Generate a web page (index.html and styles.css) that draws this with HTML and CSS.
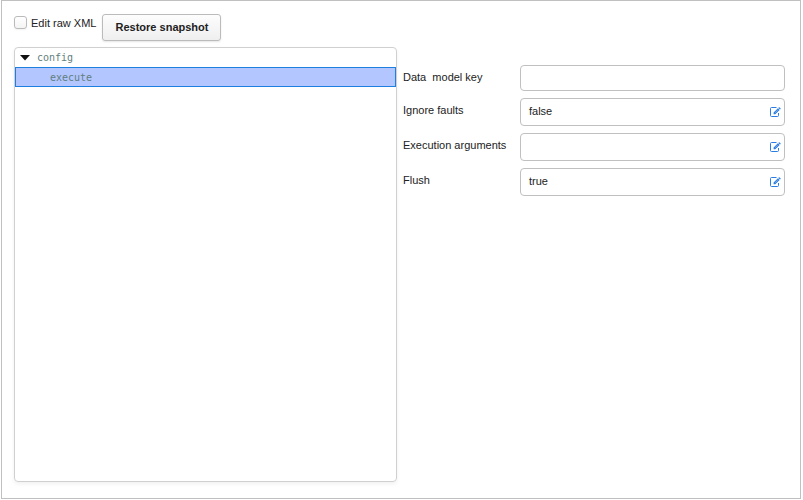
FILE: index.html
```html
<!DOCTYPE html>
<html lang="en">
<head>
<meta charset="utf-8">
<title>Configuration</title>
<link rel="stylesheet" href="styles.css">
</head>
<body>
<svg class="defs" width="0" height="0" aria-hidden="true">
  <symbol id="edit" viewBox="0 0 12 12">
    <path d="M7.5 1.5h-5a1 1 0 0 0-1 1v7a1 1 0 0 0 1 1h6a1 1 0 0 0 1-1V7" fill="none" stroke="currentColor" stroke-width="1"/>
    <path d="M4.6 8.3V6.6L8.9 2.3l1.7 1.7L6.3 8.3zM9.3 1.9l.5-.5q.4-.4.8 0l.9.9q.4.4 0 .8l-.5.5z" fill="currentColor"/>
    <path d="M6.2 6.6l2.6-2.6" fill="none" stroke="#fff" stroke-width=".4"/>
  </symbol>
</svg>
<main class="frame">
  <header class="toolbar">
    <label class="raw"><span class="checkbox"></span><span class="raw-text">Edit raw XML</span></label>
    <button class="restore" type="button">Restore snapshot</button>
  </header>
  <div class="content">
    <section class="tree">
      <div class="node"><svg class="arrow" viewBox="0 0 10 6"><path d="M0 0h10L5 5.5z"/></svg><span>config</span></div>
      <div class="node selected"><span>execute</span></div>
    </section>
    <section class="form">
      <div class="row row-plain"><span class="label">Data&nbsp; model key</span><div class="field"></div></div>
      <div class="row"><span class="label">Ignore faults</span><div class="field"><span class="value">false</span><svg class="edit"><use href="#edit"/></svg></div></div>
      <div class="row"><span class="label">Execution arguments</span><div class="field"><span class="value"></span><svg class="edit"><use href="#edit"/></svg></div></div>
      <div class="row"><span class="label">Flush</span><div class="field"><span class="value">true</span><svg class="edit"><use href="#edit"/></svg></div></div>
    </section>
  </div>
</main>
</body>
</html>
```
FILE: styles.css
```css
* { box-sizing: border-box; }
body {
  margin: 0;
  background: #fff;
  color: #222;
  font: 11px/14px "Liberation Sans", Arial, sans-serif;
}
.defs { display: block; }
.frame {
  width: 800px;
  height: 499px;
  margin-left: 1px;
  padding: 13px 12px 0;
  border: 1px solid #c0c0c0;
}
.toolbar { display: flex; align-items: flex-start; height: 33px; }
.raw { display: flex; width: 88px; padding-top: 2px; }
.checkbox {
  width: 13px;
  height: 13px;
  margin-right: 4px;
  border: 1px solid #bbb;
  border-radius: 3px;
  background: linear-gradient(#fff, #f4f4f4);
  box-shadow: 0 1px 2px rgba(0, 0, 0, .06);
}
.raw-text { white-space: nowrap; }
.restore {
  width: 119px;
  height: 27px;
  padding: 0 0 1px 1px;
  border: 1px solid #bbb;
  border-radius: 3px;
  background: linear-gradient(#fdfdfd, #efefef);
  box-shadow: 0 1px 2px rgba(0, 0, 0, .1);
  color: #222;
  font: bold 11px/14px "Liberation Sans", Arial, sans-serif;
}
.content { display: flex; align-items: flex-start; }
.tree {
  width: 383px;
  height: 435px;
  border: 1px solid #d0d0d0;
  border-radius: 4px;
  box-shadow: 0 2px 4px rgba(0, 0, 0, .06);
  color: #5f8080;
  font: 10px/18px "DejaVu Sans Mono", monospace;
}
.node { display: flex; align-items: center; height: 19px; padding-left: 5px; }
.arrow { width: 10px; height: 6px; margin-right: 7px; fill: #111; }
.selected {
  height: 20px;
  padding: 1px 0 0 34px;
  border: 1px solid #1f7fe0;
  background: #b3c6ff;
}
.form {
  display: flex;
  flex-direction: column;
  gap: 7px;
  padding: 18px 0 0 6px;
}
.row { display: flex; align-items: center; height: 28px; }
.row-plain { height: 26px; }
.label { width: 117px; padding-bottom: 4px; white-space: nowrap; }
.row-plain .label { padding-bottom: 2px; }
.field {
  display: flex;
  align-items: center;
  justify-content: space-between;
  width: 265px;
  height: 100%;
  padding: 0 3px 0 8px;
  border: 1px solid #c0c0c0;
  border-radius: 4px;
}
.value { padding-bottom: 2px; }
.edit { width: 12px; height: 12px; color: #2b7de1; }
```
